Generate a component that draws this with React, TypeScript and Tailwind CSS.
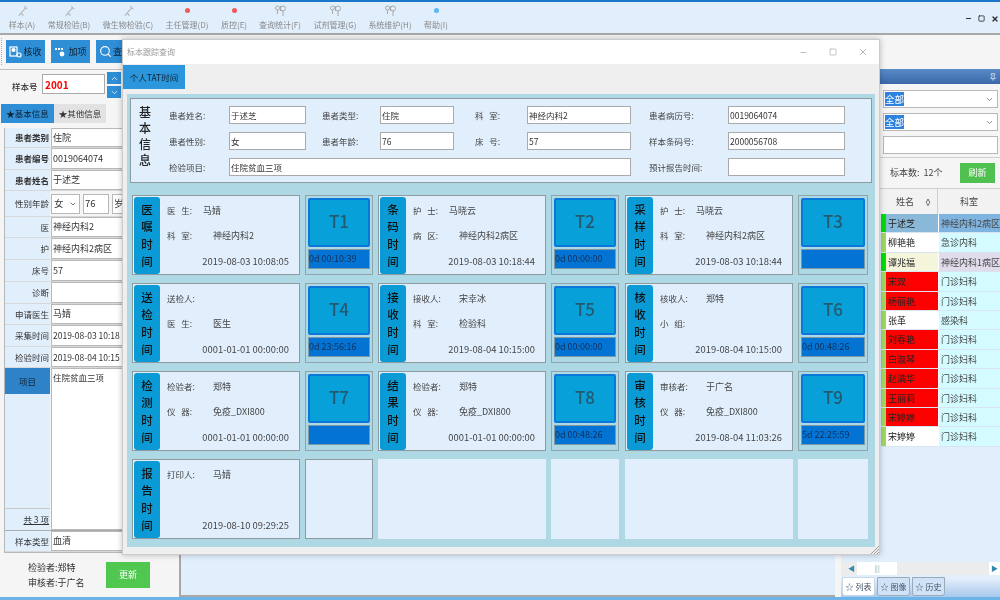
import React from "react";
import { Search, Minus, Square, X, ChevronDown, ChevronUp, Pin } from "lucide-react";

const menus: [string, string, "tool" | "red" | "blue" | "key"][] = [
  ["样本(A)", "w-[36px]", "tool"],
  ["常规检验(B)", "w-[58px]", "tool"],
  ["微生物检验(C)", "w-[60px]", "tool"],
  ["主任管理(D)", "w-[58px]", "red"],
  ["质控(E)", "w-[36px]", "red"],
  ["查询统计(F)", "w-[56px]", "key"],
  ["试剂管理(G)", "w-[54px]", "key"],
  ["系统维护(H)", "w-[56px]", "key"],
  ["帮助(I)", "w-[36px]", "blue"],
];

function MenuIcon({ kind }: { kind: string }) {
  if (kind === "red") return <span className="h-[5px] w-[5px] rounded-full bg-[#ee5a5a]" />;
  if (kind === "blue") return <span className="h-[5px] w-[5px] rounded-full bg-[#58b8f0]" />;
  if (kind === "key")
    return (
      <svg width="11" height="12" viewBox="0 0 11 12" fill="none" stroke="#a8a8a8" strokeWidth="1">
        <circle cx="2.5" cy="3" r="2" />
        <circle cx="8" cy="3.5" r="2.5" />
        <path d="M2.5 5v4M8 6v5M5.5 1v5" />
      </svg>
    );
  return (
    <svg width="11" height="12" viewBox="0 0 12 12" fill="none" stroke="#b0b0b0" strokeWidth="1.2">
      <path d="M2 11 9 3M8 1l3 3M5 9l2 2" />
    </svg>
  );
}

const leftRows: [string, string, string, boolean][] = [
  ["患者类别", "住院", "h-[20px]", true],
  ["患者编号", "0019064074", "h-[22px]", true],
  ["患者姓名", "于述芝", "h-[21px]", true],
];
const leftRows2: [string, string, string][] = [
  ["医", "神经内科2", "h-[21px]"],
  ["护", "神经内科2病区", "h-[22px]"],
  ["床号", "57", "h-[22px]"],
  ["诊断", "", "h-[22px]"],
  ["申请医生", "马婧", "h-[21px]"],
  ["采集时间", "2019-08-03 10:18", "h-[22px]"],
  ["检验时间", "2019-08-04 10:15", "h-[21px]"],
];

function LeftLabel({ children, bold }: { children: React.ReactNode; bold?: boolean }) {
  return (
    <div className={`flex w-[45px] shrink-0 items-center justify-end bg-[#e1effd] pr-[1px] text-[8.5px] whitespace-nowrap text-[#333] ${bold ? "font-bold" : ""}`}>
      {children}
    </div>
  );
}

function LeftRow({ label, value, h, bold }: { label: string; value: string; h: string; bold?: boolean }) {
  const size = value.startsWith("2019") ? "text-[8.5px]" : "text-[9px]";
  return (
    <div className={`flex border-b border-[#d8d8d8] ${h}`}>
      <LeftLabel bold={bold}>{label}</LeftLabel>
      <div className={`ml-[1px] flex flex-1 items-center border border-[#b8b8b8] bg-white pl-[1px] whitespace-nowrap text-[#333] ${size}`}>
        {value}
      </div>
    </div>
  );
}

function Field({ w, value }: { w: string; value: string }) {
  return (
    <div className={`flex h-[18px] shrink-0 items-center border border-[#aaa] bg-white pl-[1px] text-[8.5px] text-[#333] ${w}`}>
      {value}
    </div>
  );
}

function Lab({ w, children }: { w: string; children: React.ReactNode }) {
  return <div className={`shrink-0 text-[8.5px] whitespace-nowrap text-[#444] ${w}`}>{children}</div>;
}

type CardData = {
  title: string;
  rows: [string, string][];
  time: string;
};

function VerticalTitle({ title }: { title: string }) {
  return (
    <div className="flex w-[26px] shrink-0 flex-col items-center rounded-[3px] bg-[#0a9bd6] pt-[4px] text-[11.5px] leading-[17.3px] font-medium text-[#111]">
      {title.split("").map((c, i) => (
        <span key={i}>{c}</span>
      ))}
    </div>
  );
}

function Card({ data, labelW }: { data: CardData; labelW: string }) {
  return (
    <div className="flex h-[80px] w-[168px] shrink-0 gap-[7px] border border-[#8f9a9e] bg-[#e1effd] p-[1px] pb-0">
      <VerticalTitle title={data.title} />
      <div className="flex flex-1 flex-col pt-[7px] pr-[9px] pb-[6px] text-[8.5px] text-[#444]">
        {data.rows.map(([a, b], i) => (
          <div key={i} className="mb-[12px] flex h-[13px] items-center whitespace-nowrap">
            <span className={`shrink-0 ${i === 0 ? labelW : "w-[46px]"}`}>{a.replace(" ", "\u00a0\u00a0\u00a0")}</span>
            <span className="text-[9px] text-[#444]">{b}</span>
          </div>
        ))}
        <div className="mt-auto text-right text-[9.4px] whitespace-nowrap text-[#444]">{data.time}</div>
      </div>
    </div>
  );
}

function TBox({ name, time, w = "w-[68px]" }: { name: string; time: string; w?: string }) {
  return (
    <div className={`flex h-[80px] shrink-0 flex-col border border-[#8fa5ab] bg-[#aed8e4] px-[2px] pt-[2px] pb-[5px] ${w}`}>
      <div className="flex flex-1 items-center justify-center rounded-[2px] border-2 border-[#0a78d8] bg-[#08a0d8] pb-[3px] text-[17px] font-medium text-[#245a70]">
        {name}
      </div>
      <div className="mt-[2px] flex h-[20px] shrink-0 items-center border border-[#7a98a8] bg-[#0474d4] text-[9px] whitespace-nowrap text-[#10305a]">
        {time}
      </div>
    </div>
  );
}

const grid: [CardData, string, string, CardData, string, string, CardData, string, string][] = [
  [
    { title: "医嘱时间", rows: [["医 生:", "马婧"], ["科 室:", "神经内科2"]], time: "2019-08-03 10:08:05" }, "T1", "0d 00:10:39",
    { title: "条码时间", rows: [["护 士:", "马晓云"], ["病 区:", "神经内科2病区"]], time: "2019-08-03 10:18:44" }, "T2", "0d 00:00:00",
    { title: "采样时间", rows: [["护 士:", "马晓云"], ["科 室:", "神经内科2病区"]], time: "2019-08-03 10:18:44" }, "T3", "",
  ],
  [
    { title: "送检时间", rows: [["送检人:", ""], ["医 生:", "医生"]], time: "0001-01-01 00:00:00" }, "T4", "0d 23:56:16",
    { title: "接收时间", rows: [["接收人:", "宋幸冰"], ["科 室:", "检验科"]], time: "2019-08-04 10:15:00" }, "T5", "0d 00:00:00",
    { title: "核收时间", rows: [["核收人:", "郑特"], ["小 组:", ""]], time: "2019-08-04 10:15:00" }, "T6", "0d 00:48:26",
  ],
  [
    { title: "检测时间", rows: [["检验者:", "郑特"], ["仪 器:", "免疫_DXI800"]], time: "0001-01-01 00:00:00" }, "T7", "",
    { title: "结果时间", rows: [["检验者:", "郑特"], ["仪 器:", "免疫_DXI800"]], time: "0001-01-01 00:00:00" }, "T8", "0d 00:48:26",
    { title: "审核时间", rows: [["审核者:", "于广名"], ["仪 器:", "免疫_DXI800"]], time: "2019-08-04 11:03:26" }, "T9", "5d 22:25:59",
  ],
];

const patients: [string, string, string, string][] = [
  ["于述芝", "神经内科2病区", "bg-[#8ab8d8]", "bg-[#80b4e0]"],
  ["柳艳艳", "急诊内科", "bg-white", "bg-[#d4fbff]"],
  ["谭兆福", "神经内科1病区", "bg-[#f5f5dc]", "bg-[#e0dcec]"],
  ["宋双", "门诊妇科", "bg-[#ff0000]", "bg-[#d4fbff]"],
  ["杨丽艳", "门诊妇科", "bg-[#ff0000]", "bg-[#d4fbff]"],
  ["张革", "感染科", "bg-white", "bg-[#d4fbff]"],
  ["刘春艳", "门诊妇科", "bg-[#ff0000]", "bg-[#d4fbff]"],
  ["白淑琴", "门诊妇科", "bg-[#ff0000]", "bg-[#d4fbff]"],
  ["赵满华", "门诊妇科", "bg-[#ff0000]", "bg-[#d4fbff]"],
  ["王丽莉", "门诊妇科", "bg-[#ff0000]", "bg-[#d4fbff]"],
  ["宋婷婷", "门诊妇科", "bg-[#ff0000]", "bg-[#d4fbff]"],
  ["宋婷婷", "门诊妇科", "bg-white", "bg-[#d4fbff]"],
];

const barColors = ["bg-[#00e000]", "bg-[#a0d860]", "bg-[#00e000]"];

export default function App() {
  return (
    <div className="relative flex h-[600px] w-[1000px] flex-col overflow-hidden bg-[#f5f5f5] font-['Noto_Sans_CJK_SC','Noto_Sans',sans-serif] blur-[0.4px]">
      <div className="h-[2px] shrink-0 bg-[#1a76c8]" />
      <div className="flex h-[33px] shrink-0 items-center justify-between border-b-2 border-[#a8a8a8] bg-[#e1effd] pl-[4px]">
        <div className="flex">
          {menus.map(([t, w, k]) => (
            <div key={t} className={`flex flex-col items-center whitespace-nowrap ${w}`}>
              <div className="flex h-[12px] items-center">
                <MenuIcon kind={k} />
              </div>
              <span className="mt-[2px] text-[8px] leading-[12px] text-[#888]">{t}</span>
            </div>
          ))}
        </div>
        <div className="flex items-center gap-[6px] pt-[2px] pr-[1px] text-[#333]">
          <Minus size={7} strokeWidth={4} />
          <Square size={7} strokeWidth={3} />
          <X size={8} strokeWidth={4} />
        </div>
      </div>

      <div className="flex min-h-0 flex-1">
        {/* left */}
        <div className="flex w-[179px] shrink-0 flex-col">
          <div className="flex h-[34px] shrink-0 items-start gap-[6px] pt-[5px] pl-[1px]">
            <div className="mt-[-2px] mr-[-2px] h-[27px] w-[1px] border-l border-dotted border-[#aaa]" />
            <div className="flex h-[23px] w-[39px] items-center justify-center gap-[1px] bg-[#2e8ed6] text-[9px] whitespace-nowrap text-[#123]">
              <svg width="13" height="13" viewBox="0 0 13 13" fill="none" stroke="#fff" strokeWidth="1.2">
                <rect x="1" y="2" width="7" height="9" />
                <circle cx="4.5" cy="5" r="1.5" fill="#fff" />
                <circle cx="10" cy="10" r="2" />
              </svg>
              核收
            </div>
            <div className="flex h-[23px] w-[39px] items-center justify-center gap-[1px] bg-[#2e8ed6] text-[9px] whitespace-nowrap text-[#123]">
              <svg width="13" height="13" viewBox="0 0 13 13" fill="#fff">
                <rect x="1" y="3" width="2" height="2" />
                <rect x="4" y="3" width="2" height="2" />
                <rect x="7" y="3" width="2" height="2" />
                <circle cx="8" cy="9" r="2.4" />
              </svg>
              加项
            </div>
            <div className="flex h-[23px] w-[40px] items-center gap-[1px] bg-[#2e8ed6] pl-[3px] text-[9px] whitespace-nowrap text-[#123]">
              <Search size={13} color="#fff" />查询
            </div>
          </div>
          <div className="flex h-[33px] shrink-0 items-start border-t border-[#c0c0c0] pt-[2px] pl-[12px]">
            <span className="mt-[8px] w-[30px] text-[8.5px] leading-[12px] font-medium text-[#333]">样本号</span>
            <div className="mt-[2px] flex h-[20px] w-[63px] items-center border border-[#aaa] bg-white pl-[2px] text-[10px] font-bold text-[#ff0000]">2001</div>
            <div className="ml-[2px] flex flex-col gap-[2px]">
              <div className="flex h-[12px] w-[14px] items-center justify-center bg-[#2e8ed6] text-white"><ChevronUp size={9} /></div>
              <div className="flex h-[12px] w-[14px] items-center justify-center bg-[#2e8ed6] text-white"><ChevronDown size={9} /></div>
            </div>
          </div>
          <div className="flex h-[22px] shrink-0 items-center pl-[1px] text-[8.5px] whitespace-nowrap">
            <div className="flex h-[19px] w-[53px] items-center justify-center bg-[#2e8ed6] text-[#123]">★基本信息</div>
            <div className="flex h-[19px] w-[52px] items-center justify-center bg-[#e2e2e2] text-[#333]">★其他信息</div>
          </div>
          <div className="mt-[4px] ml-[4px] flex min-h-0 flex-1 flex-col border-b border-l border-[#b8b8b8]">
            {leftRows.map(([a, b, h, bold]) => (
              <LeftRow key={a} label={a} value={b} h={h} bold={bold} />
            ))}
            <div className="flex h-[26px] border-b border-[#d8d8d8]">
              <LeftLabel>性别年龄</LeftLabel>
              <div className="ml-[1px] flex flex-1 items-center gap-[3px] text-[9.5px] text-[#333]">
                <div className="flex h-[20px] w-[29px] items-center justify-between border border-[#b8b8b8] bg-white px-[2px]">女<ChevronDown size={8} /></div>
                <div className="flex h-[20px] w-[26px] items-center border border-[#b8b8b8] bg-white pl-[1px]">76</div>
                <div className="flex h-[20px] flex-1 items-center border border-[#b8b8b8] bg-white pl-[1px]">岁</div>
              </div>
            </div>
            {leftRows2.map(([a, b, h]) => (
              <LeftRow key={a} label={a} value={b} h={h} />
            ))}
            <div className="flex flex-1 border-b border-[#aaa]">
              <div className="flex w-[45px] shrink-0 flex-col bg-[#e1effd]">
                <div className="flex h-[26px] items-center justify-center bg-[#2e82c8] text-[8.5px] text-[#123]">项目</div>
                <div className="flex-1" />
                <div className="flex h-[22px] items-center justify-end border-t border-[#c8c8c8] pr-[1px] text-[8.5px] text-[#333] underline">共 3 项</div>
              </div>
              <div className="ml-[1px] flex-1 border border-[#b8b8b8] bg-white pt-[2px] pl-[1px] text-[8.5px] text-[#333]">住院贫血三项</div>
            </div>
            <LeftRow label="样本类型" value="血清" h="h-[21px]" />
          </div>
          <div className="flex h-[44px] shrink-0 items-center pl-[28px]">
            <div className="flex w-[78px] shrink-0 flex-col gap-[2px] text-[9px] leading-[13px] text-[#333]">
              <span>检验者:郑特</span>
              <span>审核者:于广名</span>
            </div>
            <div className="flex h-[26px] w-[44px] items-center justify-center bg-[#50c850] text-[9px] text-white">更新</div>
          </div>
        </div>

        {/* middle */}
        <div className="mt-[30px] mr-[6px] flex-1 border-b-2 border-l-2 border-[#a8a8a8] bg-[#e1effd]" />

        {/* right */}
        <div className="flex w-[159px] shrink-0 flex-col">
          <div className="h-[34px] shrink-0" />
          <div className="flex h-[15px] shrink-0 items-center justify-end bg-gradient-to-b from-[#5a8cc8] to-[#3a68a8] pr-[3px] text-white">
            <Pin size={8} />
          </div>
          <div className="flex min-h-0 flex-1 flex-col bg-[#e1effd]">
            <div className="flex flex-col gap-[5px] bg-[#f5f5f5] pt-[6px] pr-[2px] pb-[3px] pl-[42px]">
              {["全部", "全部"].map((t, i) => (
                <div key={i} className="flex h-[18px] items-center justify-between border border-[#b8b8b8] bg-white px-[1px] pr-[3px] text-[9.5px] text-white">
                  <span className="bg-[#2e82e0]">{t}</span>
                  <ChevronDown size={9} className="text-[#666]" />
                </div>
              ))}
              <div className="h-[18px] border border-[#b8b8b8] bg-white" />
            </div>
            <div className="flex h-[32px] shrink-0 items-center border-y border-[#d0d0d0] bg-[#f5f5f5] pr-[5px] pl-[49px] text-[9px] whitespace-nowrap text-[#444]">
              <span>标本数:&nbsp;&nbsp;12个</span>
              <div className="ml-auto flex h-[20px] w-[35px] items-center justify-center bg-[#50c050] text-[9px] text-white">刷新</div>
            </div>
            <div className="flex h-[25px] shrink-0 bg-[#f2f2f2] pl-[45px] text-[9px] text-[#444]">
              <div className="flex w-[52px] items-center justify-between border-r border-[#d0d0d0] pr-[5px] pl-[10px]">姓名<span className="text-[8px]">◊</span></div>
              <div className="flex flex-1 items-center justify-center">科室</div>
            </div>
            <div className="flex flex-col pl-[40px]">
              {patients.map(([n, d, c1, c2], i) => (
                <div key={i} className="flex h-[19.4px] border-b border-[#d8e4f0] text-[9px] leading-[19px] whitespace-nowrap">
                  <div className={`w-[5px] shrink-0 ${barColors[i] ?? "bg-[#a0d860]"}`} />
                  <div className={`w-[52px] shrink-0 pl-[2px] text-[#222] ${c1}`}>{n}</div>
                  <div className={`flex-1 overflow-hidden border-l border-white pl-[2px] text-[#444] ${c2}`}>{d}</div>
                </div>
              ))}
            </div>
            <div className="flex-1" />
            <div className="mb-[2px] flex h-[13px] shrink-0 items-center justify-between bg-[#ececec] pl-[7px] text-[7px]">
              <span className="text-[#38a]">◀</span>
              <div className="mr-auto ml-[2px] flex h-full w-[40px] items-center justify-center bg-white text-[#8ab]">|||</div>
              <div className="flex h-full w-[11px] items-center justify-center bg-white text-[#38a]">▶</div>
            </div>
            <div className="flex h-[20px] shrink-0 gap-[2px] bg-gradient-to-b from-[#e8f1fb] to-[#a8c8ec] pl-[1px] text-[8px] whitespace-nowrap text-[#456]">
              <div className="flex h-[19px] w-[33px] items-center justify-center rounded-b-[3px] border border-[#c8d8e8] bg-white">☆ 列表</div>
              <div className="flex h-[19px] w-[33px] items-center justify-center rounded-b-[3px] border border-[#9ab] bg-[#d0e2f6]">☆ 图像</div>
              <div className="flex h-[19px] w-[33px] items-center justify-center rounded-b-[3px] border border-[#9ab] bg-[#d0e2f6]">☆ 历史</div>
            </div>
          </div>
        </div>
      </div>

      <div className="h-[3px] shrink-0 bg-[#6cb4e8]" />

      {/* dialog window */}
      <div className="absolute top-[39px] left-[122px] flex h-[516px] w-[758px] flex-col border border-[#ccc] bg-[#efefef] shadow-[0_0_6px_rgba(0,0,0,0.25)]">
        <div className="flex h-[24px] shrink-0 items-center justify-between bg-white pr-[11px] pl-[4px] text-[8px] text-[#999]">
          <span>标本跟踪查询</span>
          <div className="flex items-center gap-[21px] text-[#aaa]">
            <Minus size={9} />
            <Square size={8} />
            <X size={10} />
          </div>
        </div>
        <div className="flex h-[25px] shrink-0 pt-[1px]">
          <div className="flex w-[62px] items-center justify-center bg-[#2b96dc] text-[8.5px] whitespace-nowrap text-[#123]">个人TAT时间</div>
        </div>
        <div className="mx-[4px] mt-[5px] mb-[7px] flex min-h-0 flex-1 flex-col bg-[#aed8e4] p-[3px] pt-[4px]">
          <div className="flex h-[85px] shrink-0 border border-[#8f9a9e] bg-[#e1effd] pl-[8px]">
            <div className="flex w-[13px] shrink-0 flex-col pt-[5px] text-[12px] leading-[16px] font-medium text-[#222]">
              <span>基</span><span>本</span><span>信</span><span>息</span>
            </div>
            <div className="ml-[17px] flex flex-col gap-[8px] pt-[7px]">
              <div className="flex items-center">
                <Lab w="w-[60px]">患者姓名:</Lab>
                <Field w="w-[77px]" value="于述芝" />
                <div className="w-[16px]" />
                <Lab w="w-[58px]">患者类型:</Lab>
                <Field w="w-[74px]" value="住院" />
                <div className="w-[21px]" />
                <Lab w="w-[52px]">科 &nbsp;&nbsp;室:</Lab>
                <Field w="w-[104px]" value="神经内科2" />
                <div className="w-[18px]" />
                <Lab w="w-[79px]">患者病历号:</Lab>
                <Field w="w-[117px]" value="0019064074" />
              </div>
              <div className="flex items-center">
                <Lab w="w-[60px]">患者性别:</Lab>
                <Field w="w-[77px]" value="女" />
                <div className="w-[16px]" />
                <Lab w="w-[58px]">患者年龄:</Lab>
                <Field w="w-[74px]" value="76" />
                <div className="w-[21px]" />
                <Lab w="w-[52px]">床 &nbsp;&nbsp;号:</Lab>
                <Field w="w-[104px]" value="57" />
                <div className="w-[18px]" />
                <Lab w="w-[79px]">样本条码号:</Lab>
                <Field w="w-[117px]" value="2000056708" />
              </div>
              <div className="flex items-center">
                <Lab w="w-[60px]">检验项目:</Lab>
                <Field w="w-[402px]" value="住院贫血三项" />
                <div className="w-[18px]" />
                <Lab w="w-[79px]">预计报告时间:</Lab>
                <Field w="w-[117px]" value="" />
              </div>
            </div>
          </div>
          <div className="mt-[12px] flex flex-col gap-[8px] pl-[2px]">
            {grid.map((r, i) => {
              const lw = i === 0 ? "w-[36px]" : "w-[46px]";
              return (
                <div key={i} className="flex">
                  <Card data={r[0]} labelW={lw} />
                  <div className="w-[5px]" />
                  <TBox name={r[1]} time={r[2]} />
                  <div className="w-[5px]" />
                  <Card data={r[3]} labelW={lw} />
                  <div className="w-[5px]" />
                  <TBox name={r[4]} time={r[5]} />
                  <div className="w-[6px]" />
                  <Card data={r[6]} labelW={lw} />
                  <div className="w-[5px]" />
                  <TBox name={r[7]} time={r[8]} w="w-[70px]" />
                </div>
              );
            })}
            <div className="flex">
              <Card data={{ title: "报告时间", rows: [["打印人:", "马婧"]], time: "2019-08-10 09:29:25" }} labelW="w-[46px]" />
              <div className="w-[5px]" />
              <div className="h-[80px] w-[68px] shrink-0 border border-[#8f9a9e] bg-[#e1effd]" />
              <div className="w-[5px]" />
              <div className="h-[80px] w-[168px] shrink-0 bg-[#e1effd]" />
              <div className="w-[5px]" />
              <div className="h-[80px] w-[68px] shrink-0 bg-[#e1effd]" />
              <div className="w-[6px]" />
              <div className="h-[80px] w-[168px] shrink-0 bg-[#e1effd]" />
              <div className="w-[5px]" />
              <div className="h-[80px] w-[70px] shrink-0 bg-[#e1effd]" />
            </div>
          </div>
        </div>
        <svg className="absolute right-0 bottom-0" width="9" height="9" viewBox="0 0 9 9" stroke="#999" strokeWidth="1">
          <path d="M9 1 1 9M9 4 4 9M9 7 7 9" />
        </svg>
      </div>
    </div>
  );
}
